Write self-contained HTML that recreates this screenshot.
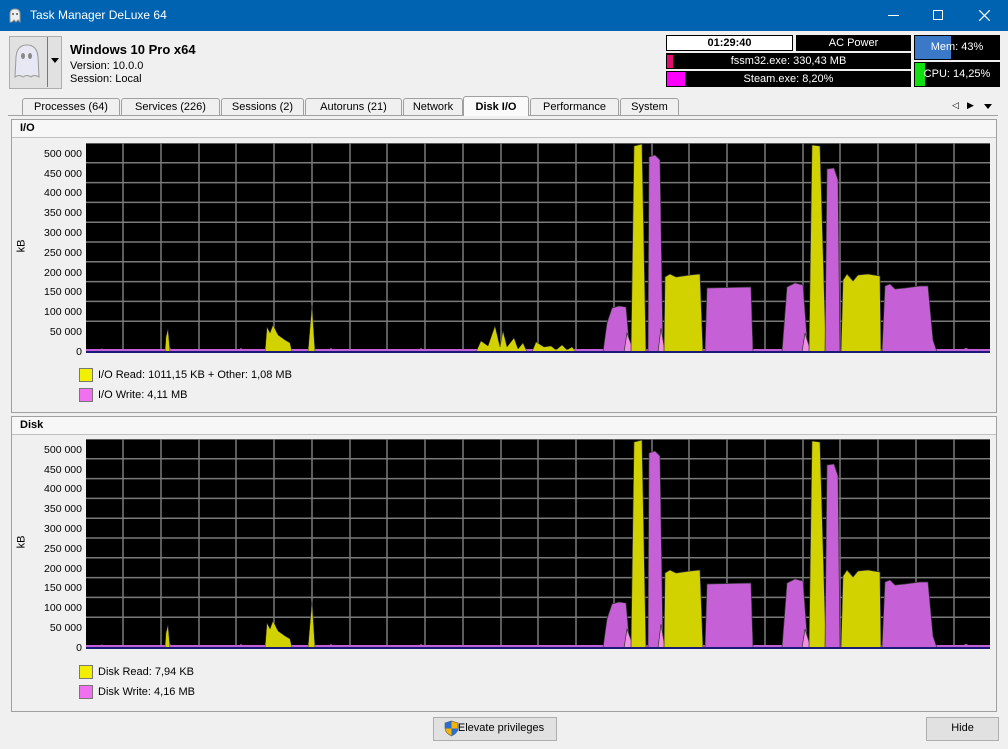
<!DOCTYPE html>
<html><head><meta charset="utf-8"><style>
*{margin:0;padding:0;box-sizing:border-box}
body{width:1008px;height:749px;background:#f0f0f0;font-family:"Liberation Sans","DejaVu Sans",sans-serif;font-size:11px;color:#000;position:relative;overflow:hidden}
.a{position:absolute}
.title{left:0;top:0;width:1008px;height:31px;background:#0063b1;color:#fff}
.blk{background:#000;color:#fff;text-align:center;font-size:11px;line-height:16px}
.tab{position:absolute;top:98px;height:17px;border:1px solid #a0a0a0;border-bottom:none;background:#f0f0f0;text-align:center;line-height:16px;font-size:11px;border-radius:3px 3px 0 0}
.panel{position:absolute;left:11px;width:986px;border:1px solid #a0a0a0;background:#f0f0f0}
.ph{height:18px;border-bottom:1px solid #c0c0c0;background:#f7f7f7;font-weight:bold;font-size:11px;line-height:17px;padding-left:8px}
.yl{position:absolute;right:0;font-size:10.5px;text-align:right;width:80px}
.leg{position:absolute;left:79px;width:14px;height:14px;border:1px solid #777}
.lt{position:absolute;left:98px;font-size:11px}
.btn{position:absolute;border:1px solid #adadad;background:#e1e1e1;text-align:center;line-height:21px;font-size:11px}
</style></head><body>
<div class="a title">
<svg class="a" style="left:8px;top:8px" width="14" height="15" viewBox="0 0 14 15"><path d="M2 14 L2 6 Q2 1 7 1 Q12 1 12 6 L12 14 L10 12 L8 14 L6 12 L4 14Z" fill="#eee" stroke="#999"/><circle cx="5" cy="6" r="1" fill="#555"/><circle cx="9" cy="6" r="1" fill="#555"/></svg>
<div class="a" style="left:30px;top:8px;font-size:12px">Task Manager DeLuxe 64</div>
<div class="a" style="left:888px;top:15px;width:11px;height:1px;background:#fff"></div>
<div class="a" style="left:933px;top:10px;width:10px;height:10px;border:1px solid #fff"></div>
<svg class="a" style="left:979px;top:10px" width="11" height="11"><path d="M0 0L11 11M11 0L0 11" stroke="#fff" stroke-width="1.2"/></svg>
</div>
<div class="a" style="left:9px;top:36px;width:53px;height:53px;border:1px solid #adadad;background:#e1e1e1"></div>
<svg class="a" style="left:12px;top:43px" width="30" height="36" viewBox="0 0 30 36"><path d="M3 34 L4 14 Q5 2 15 2 Q25 2 26 14 L27 34 Q22 31 19 34 Q15 31 11 34 Q7 31 3 34Z" fill="#e8e8f4" stroke="#999"/><ellipse cx="11" cy="13" rx="2" ry="3" fill="#888"/><ellipse cx="18" cy="13" rx="2" ry="3" fill="#888"/></svg>
<div class="a" style="left:47px;top:37px;width:1px;height:50px;background:#777"></div>
<div class="a" style="left:51px;top:58px;width:0;height:0;border-left:4px solid transparent;border-right:4px solid transparent;border-top:5px solid #000"></div>
<div class="a" style="left:70px;top:42px;font-size:13px;font-weight:bold">Windows 10 Pro x64</div>
<div class="a" style="left:70px;top:60px">Version: 10.0.0</div>
<div class="a" style="left:70px;top:73px">Session: Local</div>

<div class="a" style="left:666px;top:35px;width:127px;height:16px;border:1px solid #000;background:#fff;text-align:center;font-weight:bold;line-height:14px">01:29:40</div>
<div class="a blk" style="left:796px;top:35px;width:115px;height:16px">AC Power</div>
<div class="a blk" style="left:666px;top:53px;width:245px;height:16px">fssm32.exe: 330,43 MB</div>
<div class="a" style="left:667px;top:55px;width:6px;height:13px;background:#e0106e"></div>
<div class="a blk" style="left:666px;top:71px;width:245px;height:16px">Steam.exe: 8,20%</div>
<div class="a" style="left:667px;top:72px;width:18px;height:14px;background:#ff00ff"></div>
<div class="a" style="left:914px;top:35px;width:86px;height:25px;background:#000"></div>
<div class="a" style="left:915px;top:36px;width:36px;height:23px;background:#3a78c8"></div>
<div class="a" style="left:914px;top:41px;width:86px;text-align:center;color:#fff">Mem: 43%</div>
<div class="a" style="left:914px;top:62px;width:86px;height:25px;background:#000"></div>
<div class="a" style="left:915px;top:63px;width:10px;height:23px;background:#10e010"></div>
<div class="a" style="left:914px;top:68px;width:86px;text-align:center;color:#fff">CPU: 14,25%</div>

<div class="a" style="left:8px;top:115px;width:990px;height:1px;background:#a0a0a0"></div>
<div class="tab" style="left:22px;width:98px">Processes (64)</div>
<div class="tab" style="left:121px;width:99px">Services (226)</div>
<div class="tab" style="left:221px;width:83px">Sessions (2)</div>
<div class="tab" style="left:305px;width:97px">Autoruns (21)</div>
<div class="tab" style="left:403px;width:60px">Network</div>
<div class="tab" style="left:463px;top:96px;height:20px;width:66px;background:#fafafa;font-weight:bold;line-height:20px">Disk I/O</div>
<div class="tab" style="left:530px;width:89px">Performance</div>
<div class="tab" style="left:620px;width:59px">System</div>
<div class="a" style="left:952px;top:100px;font-size:9px">◁</div>
<div class="a" style="left:967px;top:100px;font-size:9px">▶</div>
<div class="a" style="left:984px;top:104px;width:0;height:0;border-left:4px solid transparent;border-right:4px solid transparent;border-top:5px solid #000"></div>

<svg width="0" height="0" style="position:absolute"><defs>
<g id="grid" stroke="#7a7a7a" stroke-width="1.5">
<path d="M0 178.2H904M0 158.4H904M0 138.6H904M0 118.8H904M0 99H904M0 79.2H904M0 59.4H904M0 39.6H904M0 19.8H904M0 0H904"/>
<path d="M37 0V209M75 0V209M113 0V209M150 0V209M188 0V209M226 0V209M264 0V209M301 0V209M339 0V209M377 0V209M415 0V209M452 0V209M490 0V209M528 0V209M566 0V209M603 0V209M641 0V209M679 0V209M717 0V209M754 0V209M792 0V209M830 0V209M868 0V209"/>
</g>
<g id="big" stroke="#333" stroke-width="0.7">
<polygon fill="#c660d6" points="517,209 521,180 526,165 533,163 540,164 544,209"/>
<polygon fill="#f090e0" points="538,209 541,190 548,209"/>
<polygon fill="#d2d200" points="545,209 548,3 556,1 560,209"/>
<polygon fill="#c660d6" points="562,209 563,14 569,12 574,17 577,209"/>
<polygon fill="#f090e0" points="572,209 575,185 579,209"/>
<polygon fill="#d2d200" points="578,209 579,134 584,131 590,134 604,132 614,131 617,209"/>
<polygon fill="#c660d6" points="619,209 621,145 665,144 667,209"/>
<polygon fill="#c660d6" points="696,209 701,144 709,140 717,142 722,209"/>
<polygon fill="#f090e0" points="716,209 719,190 725,209"/>
<polygon fill="#d2d200" points="723,209 726,2 734,3 740,209"/>
<polygon fill="#c660d6" points="739,209 741,26 748,25 752,37 754,209"/>
<polygon fill="#d2d200" points="755,209 757,137 761,131 767,138 772,132 782,131 794,133 795,209"/>
<polygon fill="#c660d6" points="796,209 799,143 804,141 809,146 819,145 834,143 842,143 847,197 851,209"/>
</g>
<g id="small" fill="#d2d200" stroke="#333" stroke-width="0.5">
<polygon points="79,209 80,194 82,186 84,209"/>
<polygon points="179,209 181,184 184,190 187,182 192,192 199,197 204,200 206,209"/>
<polygon points="222,209 223,197 226,162 229,209"/>
</g>
<g id="bumps" fill="#d2d200" stroke="#333" stroke-width="0.5">
<polygon points="390,209 395,198 402,203 409,183 414,204 417,188 421,204 428,195 432,206 437,200 441,209"/>
<polygon points="446,209 450,199 458,204 465,203 470,207 476,202 481,207 486,204 490,209"/>
</g>
<g id="base" fill="#c660d6"><path d="M0 209 L0 206 H904 V209Z"/><path d="M14 209 L16 205 L18 209Z M80 209 L84 205 L88 209Z M150 209 L155 205 L160 209Z M240 209 L245 205 L250 209Z M330 209 L335 205 L340 209Z M870 209 L880 205 L890 209Z"/></g>
</defs></svg>

<div class="panel" style="top:119px;height:294px">
<div class="ph">I/O</div>
</div>
<div class="a" style="left:0;top:146px;width:82px;height:220px">
<div class="yl" style="top:2px">500 000</div><div class="yl" style="top:22px">450 000</div><div class="yl" style="top:41px">400 000</div><div class="yl" style="top:61px">350 000</div><div class="yl" style="top:81px">300 000</div><div class="yl" style="top:101px">250 000</div><div class="yl" style="top:121px">200 000</div><div class="yl" style="top:140px">150 000</div><div class="yl" style="top:160px">100 000</div><div class="yl" style="top:180px">50 000</div><div class="yl" style="top:200px">0</div>
</div>
<div class="a" style="left:15px;top:240px;transform:rotate(-90deg);font-size:11px">kB</div>
<svg class="a" style="left:86px;top:143px" width="904" height="210"><rect width="904" height="210" fill="#000"/><use href="#grid"/><use href="#base"/><use href="#small"/><use href="#bumps"/><use href="#big"/><path d="M0 209H904" stroke="#1a1a7a" stroke-width="2"/></svg>
<div class="leg" style="top:368px;background:#f0f000"></div><div class="lt" style="top:369px">I/O Read: 1011,15 KB + Other: 1,08 MB</div>
<div class="leg" style="top:388px;background:#f070f0"></div><div class="lt" style="top:389px">I/O Write: 4,11 MB</div>

<div class="panel" style="top:416px;height:296px">
<div class="ph">Disk</div>
</div>
<div class="a" style="left:0;top:442px;width:82px;height:220px">
<div class="yl" style="top:2px">500 000</div><div class="yl" style="top:22px">450 000</div><div class="yl" style="top:41px">400 000</div><div class="yl" style="top:61px">350 000</div><div class="yl" style="top:81px">300 000</div><div class="yl" style="top:101px">250 000</div><div class="yl" style="top:121px">200 000</div><div class="yl" style="top:140px">150 000</div><div class="yl" style="top:160px">100 000</div><div class="yl" style="top:180px">50 000</div><div class="yl" style="top:200px">0</div>
</div>
<div class="a" style="left:15px;top:536px;transform:rotate(-90deg);font-size:11px">kB</div>
<svg class="a" style="left:86px;top:439px" width="904" height="210"><rect width="904" height="210" fill="#000"/><use href="#grid"/><use href="#base"/><use href="#small"/><use href="#big"/><path d="M0 209H904" stroke="#1a1a7a" stroke-width="2"/></svg>
<div class="leg" style="top:665px;background:#f0f000"></div><div class="lt" style="top:666px">Disk Read: 7,94 KB</div>
<div class="leg" style="top:685px;background:#f070f0"></div><div class="lt" style="top:686px">Disk Write: 4,16 MB</div>

<div class="btn" style="left:433px;top:717px;width:124px;height:24px;padding-left:12px">Elevate privileges</div>
<svg class="a" style="left:444px;top:720px" width="15" height="17" viewBox="0 0 15 17"><path d="M7.5 1 L14 3 V8 Q14 13 7.5 16 Q1 13 1 8 V3Z" fill="#f4b400" stroke="#555" stroke-width="0.6"/><path d="M7.5 1 L7.5 8.5 L1 8.5 V3Z" fill="#2a6fd0"/><path d="M7.5 8.5 H14 Q14 13 7.5 16Z" fill="#2a6fd0"/></svg>
<div class="btn" style="left:926px;top:717px;width:73px;height:24px">Hide</div>
</body></html>
